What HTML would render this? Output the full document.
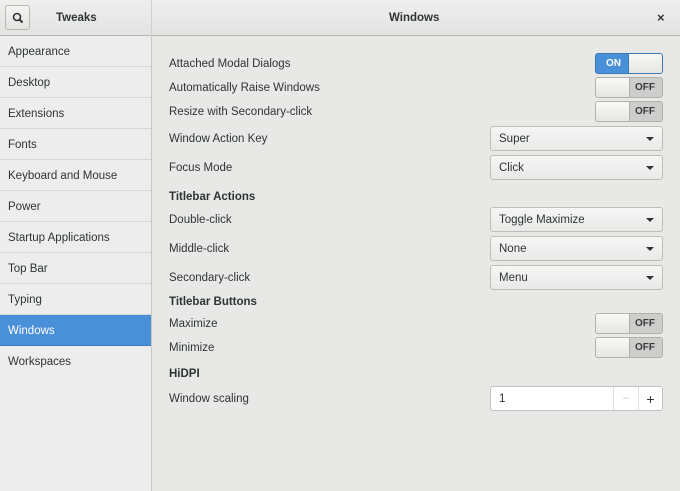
<!DOCTYPE html>
<html><head><style>
*{box-sizing:border-box;margin:0;padding:0}
body{width:680px;height:491px;overflow:hidden;font-family:"Liberation Sans","DejaVu Sans",sans-serif;font-size:11.5px;color:#2e3436;background:#e8e8e7;position:relative}
.hdr{position:absolute;left:0;top:0;width:680px;height:36px;background:linear-gradient(#eeeeed,#e3e3e2);border-bottom:1px solid #b6b6b3}
.hsep{position:absolute;left:151px;top:0;width:1px;height:36px;background:#cfcfcd}
.sbtn{position:absolute;left:5px;top:5px;width:25px;height:25px;border:1px solid #b8b8b5;border-radius:3px;background:linear-gradient(#f4f4f3,#e4e4e2)}
.ttl{position:absolute;top:12px;font-weight:bold;font-size:11.5px}
.side{position:absolute;left:0;top:36px;width:152px;height:455px;background:#ededed;border-right:1px solid #c8c8c5}
.row{height:31px;line-height:31px;padding-left:8px;padding-top:1px;border-bottom:1px solid #d6d6d4}
.row.sel{background:#4a90d9;color:#fff;border-color:#3a7bc0}
.lbl{position:absolute;left:169px;margin-top:2px}
.b{font-weight:bold}
.sw{position:absolute;left:595px;width:68px;height:21px;border:1px solid #b0b0ad;border-radius:3px;overflow:hidden;font-weight:bold;font-size:10px}
.sw .k{position:absolute;top:0;height:19px;width:34px;background:linear-gradient(#f8f8f7,#e6e6e4)}
.sw.off{background:#cdcdcb}.sw.off .k{left:0;border-right:1px solid #b0b0ad}
.sw.off span{position:absolute;right:7px;top:4px;color:#3a3a3a}
.sw.on{background:#4a90d9;border-color:#3b78b8}.sw.on .k{right:0;border-left:1px solid #3b78b8}
.sw.on span{position:absolute;left:10px;top:4px;color:#fff}
.dd{position:absolute;left:490px;width:173px;height:25px;border:1px solid #bdbdba;border-radius:3px;background:linear-gradient(#f6f6f5,#e9e9e8);padding-left:8px;line-height:24px}
.dd:after{content:"";position:absolute;right:8px;top:10px;border-left:4px solid transparent;border-right:4px solid transparent;border-top:4px solid #2e3436}
.spin{position:absolute;left:490px;top:386px;width:173px;height:25px;border:1px solid #c2c2bf;border-radius:3px;background:#fff;line-height:24px;padding-left:8px}
</style></head><body>
<div class="hdr"><div class="hsep"></div>
<div class="sbtn"><svg width="25" height="25" viewBox="0 0 25 25"><circle cx="11" cy="11" r="3.5" fill="none" stroke="#2e3436" stroke-width="1.6"/><line x1="13.5" y1="13.5" x2="16.5" y2="16.5" stroke="#2e3436" stroke-width="2"/></svg></div>
<div class="ttl" style="left:56px">Tweaks</div>
<div class="ttl" style="left:389px">Windows</div>
<div class="ttl" style="left:657px;top:10px;font-size:13px">×</div>
</div>
<div class="side">
<div class="row">Appearance</div><div class="row">Desktop</div><div class="row">Extensions</div><div class="row">Fonts</div><div class="row">Keyboard and Mouse</div><div class="row">Power</div><div class="row">Startup Applications</div><div class="row">Top Bar</div><div class="row">Typing</div><div class="row sel">Windows</div><div class="row" style="border:none">Workspaces</div>
</div>
<div class="lbl" style="top:56px">Attached Modal Dialogs</div>
<div class="lbl" style="top:80px">Automatically Raise Windows</div>
<div class="lbl" style="top:104px">Resize with Secondary-click</div>
<div class="lbl" style="top:131px">Window Action Key</div>
<div class="lbl" style="top:160px">Focus Mode</div>
<div class="lbl b" style="top:189px">Titlebar Actions</div>
<div class="lbl" style="top:212px">Double-click</div>
<div class="lbl" style="top:241px">Middle-click</div>
<div class="lbl" style="top:270px">Secondary-click</div>
<div class="lbl b" style="top:294px">Titlebar Buttons</div>
<div class="lbl" style="top:316px">Maximize</div>
<div class="lbl" style="top:340px">Minimize</div>
<div class="lbl b" style="top:366px">HiDPI</div>
<div class="lbl" style="top:391px">Window scaling</div>
<div class="sw on" style="top:53px"><div class="k"></div><span>ON</span></div>
<div class="sw off" style="top:77px"><div class="k"></div><span>OFF</span></div>
<div class="sw off" style="top:101px"><div class="k"></div><span>OFF</span></div>
<div class="dd" style="top:126px">Super</div>
<div class="dd" style="top:155px">Click</div>
<div class="dd" style="top:207px">Toggle Maximize</div>
<div class="dd" style="top:236px">None</div>
<div class="dd" style="top:265px">Menu</div>
<div class="sw off" style="top:313px"><div class="k"></div><span>OFF</span></div>
<div class="sw off" style="top:337px"><div class="k"></div><span>OFF</span></div>
<div class="spin">1
<div style="position:absolute;left:122px;top:0;width:25px;height:23px;border-left:1px solid #e0e0de;text-align:center;color:#c8c8c6">−</div>
<div style="position:absolute;left:147px;top:0;width:24px;height:23px;border-left:1px solid #e0e0de;text-align:center;font-size:14px">+</div>
</div>
</body></html>
